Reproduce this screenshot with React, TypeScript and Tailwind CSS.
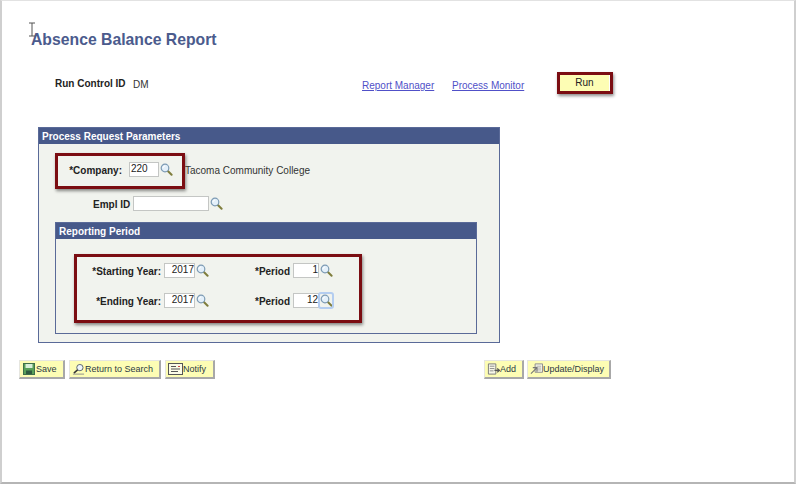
import React from "react";

const Lens = ({ focus = false }: { focus?: boolean }) => (
  <span className={`flex h-[15px] w-[14px] items-center justify-center ${focus ? "rounded-[2px] outline outline-2 -outline-offset-1 outline-[#b4cdf0]" : ""}`}>
    <svg width="13" height="13" viewBox="0 0 13 13">
      <path d="M7.6 7.8 L11.6 11.8" stroke="#7f7d3c" strokeWidth="2" strokeLinecap="round" />
      <circle cx="5" cy="5" r="3.8" fill="#e4f0fa" stroke="#7c9ab4" strokeWidth="1.2" />
      <path d="M3 5 A2 2 0 0 1 5 3" stroke="#ffffff" strokeWidth="1" fill="none" />
    </svg>
  </span>
);

const Field = ({ value, w }: { value?: string; w: string }) => (
  <div className={`${w} flex h-[15px] items-center justify-end border border-[#c4c6c4] bg-white pb-[1px] text-[10px] leading-none text-[#222]`}>
    {value}
  </div>
);

const ToolButton = ({ w, icon, label }: { w: string; icon: React.ReactNode; label: string }) => (
  <div className={`${w} flex h-[19px] items-center whitespace-nowrap border border-[#e6e6e0] border-b-2 border-r-2 border-b-[#a8a8a8] border-r-[#a8a8a8] bg-[#fdfdb4] pl-[2px] text-[9px] leading-none text-[#2c3a44]`}>
    {icon}
    <span className="mt-[1px]">{label}</span>
  </div>
);

const SaveIcon = () => (
  <svg className="mx-[1px]" width="12" height="12" viewBox="0 0 12 12">
    <rect x="0.5" y="0.5" width="11" height="11" fill="#58a058" stroke="#3f6f4a" />
    <rect x="2.5" y="1" width="7" height="4" fill="#d8efd8" />
    <rect x="3" y="7.5" width="6" height="3.5" fill="#2f5a3f" />
  </svg>
);

const SearchIcon = () => (
  <svg width="13" height="12" viewBox="0 0 14 12">
    <circle cx="8.5" cy="4.5" r="3.4" fill="#eef5fb" stroke="#55606c" />
    <path d="M6 7 L2 10.5" stroke="#333" strokeWidth="1.6" />
    <path d="M1 11.5 H13" stroke="#888" strokeWidth="1" />
  </svg>
);

const NotifyIcon = () => (
  <svg width="15" height="12" viewBox="0 0 15 12">
    <rect x="0.5" y="0.5" width="14" height="11" fill="#fbfbe6" stroke="#555" />
    <path d="M3 3.5 H8 M3 6 H12 M3 8.5 H10" stroke="#555" strokeWidth="1" />
    <path d="M10 3.5 H12" stroke="#c44" strokeWidth="1" />
  </svg>
);

const AddIcon = () => (
  <svg width="13" height="12" viewBox="0 0 14 12">
    <path d="M1.5 0.5 H9.5 V11.5 H1.5 Z" fill="#f7f7e8" stroke="#777" />
    <path d="M3 3 H8 M3 5.5 H8 M3 8 H7" stroke="#888" strokeWidth="1" />
    <path d="M8 7.5 H13 M11 5.5 L13.5 7.5 L11 9.5" stroke="#555" strokeWidth="1.2" fill="none" />
  </svg>
);

const UpdateIcon = () => (
  <svg width="13" height="12" viewBox="0 0 14 12">
    <path d="M5.5 0.5 H13.5 V9.5 H5.5 Z" fill="#f7f7e8" stroke="#888" />
    <path d="M7 3 H12 M7 5 H12 M7 7 H12" stroke="#aaa" strokeWidth="1" />
    <path d="M1 11 L7 5 M3 4.5 H7.5 V9" stroke="#777" strokeWidth="1.2" fill="none" />
  </svg>
);

const Label = ({ children, w }: { children: string; w: string }) => (
  <span className={`${w} whitespace-nowrap pt-[2px] text-right text-[10px] font-bold leading-none text-[#222]`}>{children}</span>
);

export default function App() {
  return (
    <div className="relative h-[485px] w-[797px] overflow-hidden bg-white font-['Liberation_Sans',Arial,sans-serif]">
      <div className="flex h-[484px] w-[796px] flex-col border-b-2 border-l-2 border-r-2 border-t border-b-[#b5b5b5] border-l-[#cfcfcf] border-r-[#cfcfcf] border-t-[#e2e2e2]">
        <h1 className="ml-[29px] mt-[29px] text-[15.75px] font-bold leading-[19px] text-[#4b5b8d]">Absence Balance Report</h1>

        {/* Run control row */}
        <div className="ml-[53px] mt-[26px] flex h-[20px] items-start whitespace-nowrap text-[10px] leading-none">
          <span className="mt-[4px] w-[78px] font-bold text-[#222]">Run Control ID</span>
          <span className="mt-[5px] w-[229px] text-[#333]">DM</span>
          <a className="mt-[6px] w-[90px] text-[#5050c8] underline">Report Manager</a>
          <a className="mt-[6px] w-[105px] text-[#5050c8] underline">Process Monitor</a>
          <div className="ml-[3px] flex h-[16px] w-[49px] items-center justify-center bg-[#fdfdb4] text-[#222]">Run</div>
        </div>

        {/* Process Request Parameters */}
        <section className="ml-[36px] mt-[32px] h-[216px] w-[462px] border border-[#5a6a98] bg-[#f1f3ee]">
          <div className="flex h-[16px] items-center bg-[#47598a] pl-[3px] pt-[2px] text-[10px] font-bold leading-none text-white">
            Process Request Parameters
          </div>
          <div className="ml-[30px] mt-[18px] flex items-center">
            <Label w="w-[53px]">*Company:</Label>
            <Field value="220" w="ml-[7px] w-[30px] !justify-start !pl-[1px]" />
            <Lens />
            <span className="ml-[12px] pt-[2px] text-[10px] leading-none text-[#333]">Tacoma Community College</span>
          </div>
          <div className="ml-[54px] mt-[19px] flex items-center">
            <Label w="w-[37px]">Empl ID</Label>
            <Field w="ml-[3px] w-[76px]" />
            <Lens />
          </div>

          {/* Reporting Period */}
          <div className="ml-[16px] mt-[11px] h-[112px] w-[422px] border border-[#5a6a98]">
            <div className="flex h-[16px] items-center bg-[#47598a] pl-[3px] pt-[1px] text-[10px] font-bold leading-none text-white">
              Reporting Period
            </div>
            <div className="mt-[24px] flex items-center">
              <Label w="w-[105px]">*Starting Year:</Label>
              <Field value="2017" w="ml-[3px] w-[31px]" />
              <Lens />
              <Label w="w-[81px]">*Period</Label>
              <Field value="1" w="ml-[3px] w-[26px]" />
              <Lens />
            </div>
            <div className="mt-[15px] flex items-center">
              <Label w="w-[105px]">*Ending Year:</Label>
              <Field value="2017" w="ml-[3px] w-[31px]" />
              <Lens />
              <Label w="w-[81px]">*Period</Label>
              <Field value="12" w="ml-[3px] w-[26px]" />
              <Lens focus />
            </div>
          </div>
        </section>

        {/* Toolbar */}
        <div className="ml-[17px] mt-[17px] flex w-[592px] gap-[4px]">
          <ToolButton w="w-[46px]" icon={<SaveIcon />} label="Save" />
          <ToolButton w="w-[92px]" icon={<SearchIcon />} label="Return to Search" />
          <ToolButton w="w-[50px]" icon={<NotifyIcon />} label="Notify" />
          <div className="ml-auto flex gap-[3px]">
            <ToolButton w="w-[40px]" icon={<AddIcon />} label="Add" />
            <ToolButton w="w-[84px]" icon={<UpdateIcon />} label="Update/Display" />
          </div>
        </div>
      </div>

      {/* Annotation boxes drawn over the screen */}
      <div className="absolute left-[557px] top-[72px] h-[22px] w-[56px] border-[3px] border-[#7b0d12] shadow-[1px_2px_3px_rgba(0,0,0,0.45)]" />
      <div className="absolute left-[55px] top-[153px] h-[36px] w-[130px] border-[3px] border-[#7b0d12] shadow-[1px_2px_3px_rgba(0,0,0,0.45)]" />
      <div className="absolute left-[74px] top-[254px] h-[69px] w-[288px] border-[3px] border-[#7b0d12] shadow-[1px_2px_3px_rgba(0,0,0,0.45)]" />

      {/* Text cursor */}
      <svg className="absolute left-[28px] top-[22px]" width="8" height="15" viewBox="0 0 8 15">
        <path d="M1 1 H7 M4 1 V14 M1 14 H7" stroke="#555" strokeWidth="1" fill="none" />
      </svg>
    </div>
  );
}
